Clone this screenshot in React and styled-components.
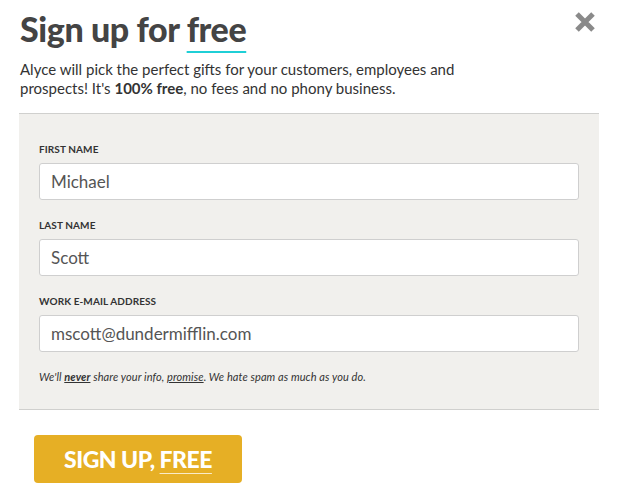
import React from 'react'
import styled, { createGlobalStyle } from 'styled-components'

const GlobalStyle = createGlobalStyle`
  body {
    margin: 0;
    background: #fff;
    font-family: Lato, "Liberation Sans", sans-serif;
    color: #333;
  }
`

const Modal = styled.div`
  width: 617px;
  padding: 0 18px 0 19px;
  box-sizing: border-box;
`

const Header = styled.div`
  display: flex;
  justify-content: space-between;
  align-items: flex-start;
`

const Title = styled.h1`
  margin: 9px 0 0 1px;
  font-size: 34px;
  line-height: 40px;
  font-weight: 900;
  color: #444;
  letter-spacing: -0.4px;
`

const Highlight = styled.span`
  text-decoration: underline;
  text-decoration-color: #1fcfd6;
  text-decoration-thickness: 2px;
  text-underline-offset: 9px;
`

const Close = styled.button`
  margin: 11px 3px 0 0;
  padding: 0;
  border: 0;
  background: none;
  cursor: pointer;
  width: 22px;
  height: 22px;
  display: flex;
`

const Intro = styled.p`
  margin: 11px 0 0 1px;
  font-size: 15px;
  line-height: 19px;
  color: #333;
  max-width: 450px;
`

const Panel = styled.form`
  margin-top: 15px;
  background: #f1f0ed;
  border-top: 1px solid #d0d0ce;
  border-bottom: 1px solid #d0d0ce;
  padding: 28px 20px 25px 20px;
  display: flex;
  flex-direction: column;
  gap: 18px;
`

const Field = styled.label`
  display: flex;
  flex-direction: column;
  gap: 7px;
`

const Label = styled.span`
  font-size: 10px;
  line-height: 14px;
  font-weight: 700;
  color: #333;
  letter-spacing: 0.1px;
`

const Input = styled.input`
  height: 37px;
  box-sizing: border-box;
  border: 1px solid #cfcfcf;
  border-radius: 3px;
  background: #fff;
  padding: 0 11px;
  font-family: Lato, "Liberation Sans", sans-serif;
  font-size: 17px;
  color: #555;
  outline: none;
`

const Note = styled.p`
  margin: 0;
  font-size: 11px;
  line-height: 14px;
  font-style: italic;
  color: #333;
  letter-spacing: 0.1px;

  b {
    text-decoration: underline;
  }
  u {
    text-decoration: underline;
  }
`

const Submit = styled.button`
  margin: 25px 0 0 15px;
  width: 208px;
  height: 48px;
  border: 0;
  border-radius: 4px;
  background: #e6af25;
  color: #fff;
  font-family: Lato, "Liberation Sans", sans-serif;
  font-size: 23px;
  font-weight: 900;
  letter-spacing: -0.5px;
  cursor: pointer;
`

const ButtonFree = styled.span`
  text-decoration: underline;
  text-decoration-color: rgba(255, 255, 255, 0.75);
  text-decoration-thickness: 1px;
  text-underline-offset: 5px;
`

function CloseIcon() {
  return (
    <svg width="22" height="22" viewBox="0 0 22 22">
      <path d="M3 3 L19 19 M19 3 L3 19" stroke="#8a8a8a" strokeWidth="5" strokeLinecap="butt" />
    </svg>
  )
}

export default function App() {
  return (
    <>
      <GlobalStyle />
      <Modal>
        <Header>
          <Title>
            Sign up for <Highlight>free</Highlight>
          </Title>
          <Close type="button" aria-label="Close">
            <CloseIcon />
          </Close>
        </Header>
        <Intro>
          Alyce will pick the perfect gifts for your customers, employees and prospects! It's{' '}
          <strong>100% free</strong>, no fees and no phony business.
        </Intro>
        <Panel onSubmit={e => e.preventDefault()}>
          <Field>
            <Label>FIRST NAME</Label>
            <Input defaultValue="Michael" />
          </Field>
          <Field>
            <Label>LAST NAME</Label>
            <Input defaultValue="Scott" />
          </Field>
          <Field>
            <Label>WORK E-MAIL ADDRESS</Label>
            <Input defaultValue="mscott@dundermifflin.com" />
          </Field>
          <Note>
            We'll <b>never</b> share your info, <u>promise</u>. We hate spam as much as you do.
          </Note>
        </Panel>
        <Submit type="button">
          SIGN UP, <ButtonFree>FREE</ButtonFree>
        </Submit>
      </Modal>
    </>
  )
}
